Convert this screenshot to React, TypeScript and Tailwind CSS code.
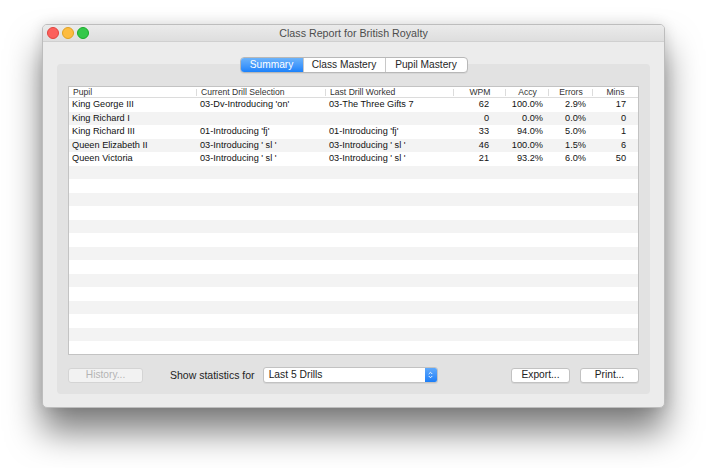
import { ChevronDown, ChevronUp } from "lucide-react";

type Row = {
  pupil: string;
  current: string;
  last: string;
  wpm: string;
  accy: string;
  errors: string;
  mins: string;
};

const rows: Row[] = [
  { pupil: "King George III", current: "03-Dv-Introducing 'on'", last: "03-The Three Gifts 7", wpm: "62", accy: "100.0%", errors: "2.9%", mins: "17" },
  { pupil: "King Richard I", current: "", last: "", wpm: "0", accy: "0.0%", errors: "0.0%", mins: "0" },
  { pupil: "King Richard III", current: "01-Introducing 'fj'", last: "01-Introducing 'fj'", wpm: "33", accy: "94.0%", errors: "5.0%", mins: "1" },
  { pupil: "Queen Elizabeth II", current: "03-Introducing ' sl '", last: "03-Introducing ' sl '", wpm: "46", accy: "100.0%", errors: "1.5%", mins: "6" },
  { pupil: "Queen Victoria", current: "03-Introducing ' sl '", last: "03-Introducing ' sl '", wpm: "21", accy: "93.2%", errors: "6.0%", mins: "50" },
];

const TOTAL_ROWS = 20;

function TrafficLights() {
  return (
    <div className="flex items-center gap-[3px] pl-[4px]">
      <span className="h-[12px] w-[12px] rounded-full border border-[#e0443e] bg-[#fc605c]" />
      <span className="h-[12px] w-[12px] rounded-full border border-[#dea123] bg-[#fdbc40]" />
      <span className="h-[12px] w-[12px] rounded-full border border-[#1aab29] bg-[#34c84a]" />
    </div>
  );
}

function Tabs() {
  const tabs = [
    { label: "Summary", w: "w-[62px]", active: true },
    { label: "Class Mastery", w: "w-[82px]", active: false },
    { label: "Pupil Mastery", w: "w-[82px]", active: false },
  ];
  return (
    <div className="relative z-10 flex justify-center">
      <div className="flex h-[16px] overflow-hidden rounded-[4px] border border-[#b8b8b8] bg-white shadow-[0_1px_0_rgba(0,0,0,0.05)]">
        {tabs.map((t, i) => (
          <div
            key={t.label}
            className={
              "flex items-center justify-center text-[10.2px] leading-none " +
              t.w +
              (i > 0 ? " border-l border-[#c8c8c8]" : "") +
              (t.active
                ? " bg-gradient-to-b from-[#6cb3fa] to-[#1a82fb] text-white"
                : " text-[#262626]")
            }
          >
            {t.label}
          </div>
        ))}
      </div>
    </div>
  );
}

function HeaderCell({ label, w, align }: { label: string; w: string; align: "left" | "center" }) {
  return (
    <div className={"relative flex h-full items-center " + w + (align === "left" ? " pl-[4px]" : " justify-center")}>
      <span>{label}</span>
      <span className="absolute right-0 top-[2px] h-[7px] w-px bg-[#dcdcdc]" />
    </div>
  );
}

function ReportTable() {
  const filler = Array.from({ length: TOTAL_ROWS - rows.length }, (_, i) => i);
  return (
    <div className="flex h-[269px] flex-col overflow-hidden border border-[#c3c3c3] bg-white">
      <div className="flex h-[11px] shrink-0 border-b border-[#dcdcdc] text-[8.6px] leading-none text-[#333]">
        <HeaderCell label="Pupil" w="w-[128px]" align="left" />
        <HeaderCell label="Current Drill Selection" w="w-[129px]" align="left" />
        <HeaderCell label="Last Drill Worked" w="w-[128px]" align="left" />
        <HeaderCell label="WPM" w="w-[52px]" align="center" />
        <HeaderCell label="Accy" w="w-[43px]" align="center" />
        <HeaderCell label="Errors" w="w-[44px]" align="center" />
        <div className="flex flex-1 items-center justify-center">Mins</div>
      </div>
      <div className="flex flex-col text-[9.2px] leading-none text-[#111]">
        {rows.map((r, i) => (
          <div key={r.pupil} className={"flex h-[13.5px] shrink-0 items-center " + (i % 2 === 1 ? "bg-[#f3f3f3]" : "bg-white")}>
            <div className="w-[128px] pl-[3px]">{r.pupil}</div>
            <div className="w-[129px] pl-[3px]">{r.current}</div>
            <div className="w-[128px] pl-[3px]">{r.last}</div>
            <div className="w-[52px] pr-[17px] text-right">{r.wpm}</div>
            <div className="w-[43px] pr-[6px] text-right">{r.accy}</div>
            <div className="w-[44px] pr-[7px] text-right">{r.errors}</div>
            <div className="flex-1 pr-[12px] text-right">{r.mins}</div>
          </div>
        ))}
        {filler.map((i) => (
          <div key={i} className={"h-[13.5px] shrink-0 " + ((i + rows.length) % 2 === 1 ? "bg-[#f3f3f3]" : "bg-white")} />
        ))}
      </div>
    </div>
  );
}

function PushButton({ label, disabled }: { label: string; disabled?: boolean }) {
  return (
    <button
      type="button"
      disabled={disabled}
      className={
        "flex h-[15px] items-center justify-center rounded-[3px] border text-[10.2px] leading-none " +
        (disabled
          ? "w-[75px] border-[#d4d4d4] bg-[#f2f2f2] text-[#b4b4b4]"
          : "w-[59px] border-[#c2c2c2] bg-white text-[#222] shadow-[0_1px_0_rgba(0,0,0,0.06)]")
      }
    >
      {label}
    </button>
  );
}

function StatsSelect() {
  return (
    <div className="flex h-[16px] w-[175px] items-stretch overflow-hidden rounded-[3px] border border-[#c2c2c2] bg-white shadow-[0_1px_0_rgba(0,0,0,0.06)]">
      <div className="flex flex-1 items-center pl-[5px] text-[10.3px] leading-none text-[#222]">Last 5 Drills</div>
      <div className="flex w-[12px] flex-col items-center justify-center bg-gradient-to-b from-[#5fa9fb] to-[#1a7ef8] text-white">
        <ChevronUp className="-mb-[2px] h-[6px] w-[7px]" strokeWidth={3.5} />
        <ChevronDown className="h-[6px] w-[7px]" strokeWidth={3.5} />
      </div>
    </div>
  );
}

export default function App() {
  return (
    <div className="h-[468px] w-[707px] overflow-hidden bg-white pl-[42px] pt-[24px] font-['Liberation_Sans',Arial,sans-serif]">
      <div className="flex h-[384px] w-[623px] flex-col overflow-hidden rounded-[5px] border border-[#bdbdbd] bg-[#ececec] shadow-[0_24px_34px_rgba(0,0,0,0.5),0_0_14px_rgba(0,0,0,0.12)]">
        <div className="grid h-[17px] shrink-0 grid-cols-[1fr_auto_1fr] items-center border-b border-[#d0d0d0] bg-gradient-to-b from-[#ebebeb] to-[#dedede]">
          <TrafficLights />
          <div className="text-[10.7px] leading-none text-[#4d4d4d]">Class Report for British Royalty</div>
          <div />
        </div>
        <div className="flex flex-1 flex-col px-[14px] pb-[14px] pt-[15px]">
          <Tabs />
          <div className="-mt-[9px] flex flex-1 flex-col rounded-[4px] bg-[#e2e2e2] px-[11px] pb-[11px] pt-[22px]">
            <ReportTable />
            <div className="mt-[12px] flex items-center">
              <PushButton label="History..." disabled />
              <span className="ml-[27px] text-[10.5px] leading-none text-[#222]">Show statistics for</span>
              <div className="ml-[8px]">
                <StatsSelect />
              </div>
              <div className="ml-auto flex gap-[10px]">
                <PushButton label="Export..." />
                <PushButton label="Print..." />
              </div>
            </div>
          </div>
        </div>
      </div>
    </div>
  );
}
